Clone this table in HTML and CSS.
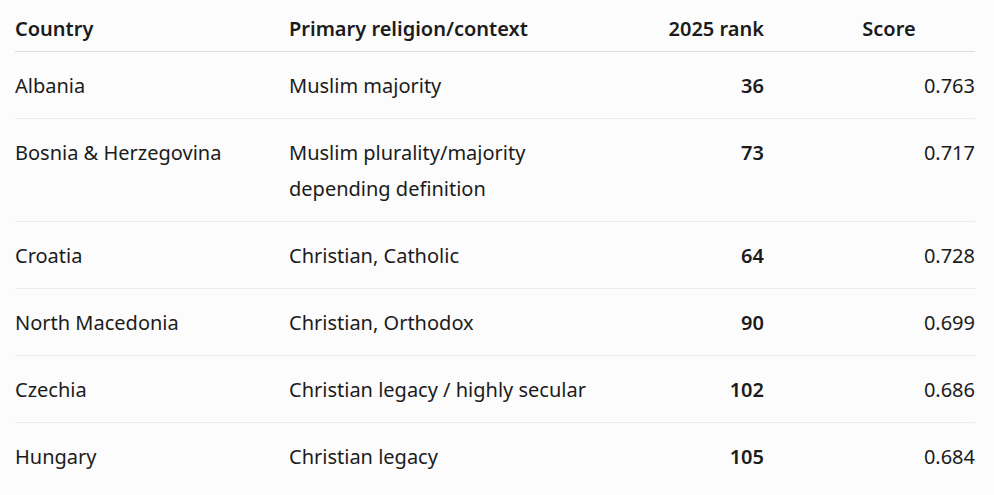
FILE: index.html
```html
<!DOCTYPE html>
<html lang="en">
<head>
<meta charset="utf-8">
<title>Rankings</title>
<link rel="stylesheet" href="styles.css">
</head>
<body>
<div class="wrap">
<table class="data">
  <thead>
    <tr>
      <th class="c-country">Country</th>
      <th class="c-rel">Primary religion/context</th>
      <th class="c-rank">2025 rank</th>
      <th class="c-score">Score</th>
    </tr>
  </thead>
  <tbody>
    <tr><td>Albania</td><td>Muslim majority</td><td class="num"><strong>36</strong></td><td class="num">0.763</td></tr>
    <tr><td>Bosnia &amp; Herzegovina</td><td>Muslim plurality/majority<br>depending definition</td><td class="num"><strong>73</strong></td><td class="num">0.717</td></tr>
    <tr><td>Croatia</td><td>Christian, Catholic</td><td class="num"><strong>64</strong></td><td class="num">0.728</td></tr>
    <tr><td>North Macedonia</td><td>Christian, Orthodox</td><td class="num"><strong>90</strong></td><td class="num">0.699</td></tr>
    <tr><td>Czechia</td><td>Christian legacy / highly secular</td><td class="num"><strong>102</strong></td><td class="num">0.686</td></tr>
    <tr><td>Hungary</td><td>Christian legacy</td><td class="num"><strong>105</strong></td><td class="num">0.684</td></tr>
  </tbody>
</table>
</div>
</body>
</html>
```
FILE: styles.css
```css
html, body {
  margin: 0;
  padding: 0;
  background: #fcfcfc;
}
body {
  font-family: "Noto Sans", "Open Sans", sans-serif;
  color: #1b1b1b;
  font-size: 20px;
}
.wrap {
  padding: 0 19px 0 15px;
}
.data {
  width: 960px;
  border-collapse: collapse;
  table-layout: fixed;
}
.data th, .data td {
  line-height: 36px;
  vertical-align: top;
  padding: 16px 16px 14px;
}
.data th {
  font-weight: 600;
  padding-top: 11px;
  padding-bottom: 4px;
  border-bottom: 1px solid #dcdcdc;
  text-align: left;
}
.data td {
  font-weight: 400;
  border-bottom: 1px solid #ececec;
}
.data tbody tr:last-child td {
  border-bottom: none;
}
.data th:first-child, .data td:first-child { padding-left: 0; }
.data th:last-child, .data td:last-child { padding-right: 0; }
.c-country { width: 242px; }
.c-rel { width: 330px; }
.c-rank { width: 113px; }
.data th.c-rank { text-align: right; }
.data th.c-score { text-align: center; padding-left: 23px; }
.num { text-align: right; }
.num strong { font-weight: 600; }
```
